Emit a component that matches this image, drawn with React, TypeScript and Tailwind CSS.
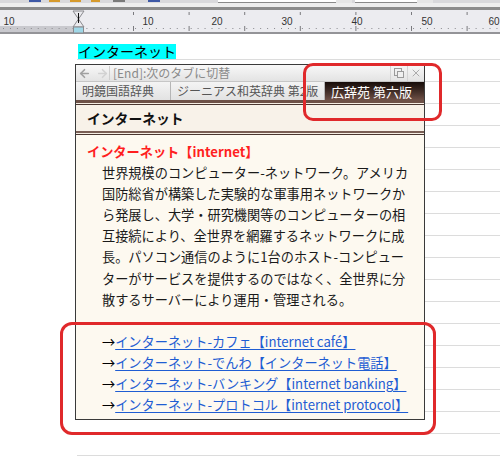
import { ArrowLeft, ArrowRight, X } from 'lucide-react';

const paragraph = [
  '世界規模のコンピューター-ネットワーク。アメリカ',
  '国防総省が構築した実験的な軍事用ネットワークか',
  'ら発展し、大学・研究機関等のコンピューターの相',
  '互接続により、全世界を網羅するネットワークに成',
  '長。パソコン通信のように1台のホスト-コンピュー',
  'ターがサービスを提供するのではなく、全世界に分',
  '散するサーバーにより運用・管理される。',
];

const links = [
  'インターネット-カフェ【internet café】',
  'インターネット-でんわ【インターネット電話】',
  'インターネット-バンキング【internet banking】',
  'インターネット-プロトコル【internet protocol】',
];

// 上のツールバーの端っこ
const ToolbarStrip = () => (
  <svg width={500} height={3} className="block">
    <rect width={500} height={3} fill="#d9d9dc" />
    <rect x={29} y={0} width={12} height={2} fill="#3d58a6" />
    <rect x={49} y={0} width={11} height={2} fill="#d69a2c" />
    <rect x={70} y={0} width={11} height={2} fill="#d69a2c" />
    <rect x={91} y={0} width={9} height={2} fill="#d69a2c" />
    <rect x={113} y={0} width={12} height={2} fill="#7a7a7a" />
    <rect x={148} y={0} width={12} height={2} fill="#3d58a6" />
    <rect x={218} y={0} width={134} height={3} fill="#ffffff" />
    <rect x={218} y={2} width={134} height={1} fill="#8a8a8a" />
    <rect x={336} y={0} width={16} height={3} fill="#e6e6e6" />
    <rect x={355} y={0} width={78} height={3} fill="#ffffff" />
    <rect x={355} y={2} width={78} height={1} fill="#8a8a8a" />
    <rect x={417} y={0} width={16} height={3} fill="#e6e6e6" />
  </svg>
);

const Ruler = () => {
  const dots = Array.from({ length: 72 }, (_, i) => 3 + i * 6.95);
  const majors = Array.from({ length: 7 }, (_, i) => 133 + i * 55.6);
  const nums = [
    { x: 9, t: '10' },
    { x: 148, t: '10' },
    { x: 217, t: '20' },
    { x: 287, t: '30' },
    { x: 357, t: '40' },
    { x: 427, t: '50' },
    { x: 494, t: '60' },
  ];
  return (
    <svg width={500} height={24} className="block">
      <rect width={500} height={24} fill="#ececf0" />
      <rect x={0} y={16} width={74} height={6} fill="#c9c9ce" />
      <rect x={0} y={22} width={500} height={2} fill="#949498" />
      {dots.map(x => (
        <rect key={x} x={x} y={18} width={1} height={1} fill="#8a8a8e" />
      ))}
      {majors.map(x => (
        <g key={x}>
          <rect x={x} y={2} width={1} height={3} fill="#7a7a7e" />
          <rect x={x} y={16} width={1} height={5} fill="#7a7a7e" />
        </g>
      ))}
      {nums.map(n => (
        <text key={n.x} x={n.x} y={15} fontSize={10} fill="#333" textAnchor="middle" fontFamily="Liberation Sans, sans-serif">
          {n.t}
        </text>
      ))}
      <polygon points="73,1 84,1 78.5,9" fill="#eaeaee" stroke="#8a8a8e" strokeWidth={1} />
      <polygon points="78.5,9 73,17 84,17" fill="#eaeaee" stroke="#8a8a8e" strokeWidth={1} />
      <rect x={73.5} y={17} width={10} height={6} fill="#9fd7e7" stroke="#8a8a8e" strokeWidth={1} />
      <rect x={78} y={3} width={1} height={10} fill="#111" />
    </svg>
  );
};

const RestoreIcon = () => (
  <svg width={10} height={10} viewBox="0 0 10 10" className="block">
    <rect x={0.5} y={0.5} width={7} height={7} fill="none" stroke="#9a9a9a" />
    <rect x={3.5} y={3.5} width={6} height={6} fill="#f0f0f0" stroke="#9a9a9a" />
  </svg>
);

export default function App() {
  return (
    <div className="relative w-[500px] h-[457px] overflow-hidden bg-white [font-family:'Noto_Sans_CJK_JP','Noto_Sans',sans-serif]">
      <ToolbarStrip />
      <div className="h-[4px] bg-[#eeeeee]" />
      <div className="h-[3px] bg-[#8c8c8c]" />
      <Ruler />

      {/* ページの行 */}
      <div className="pl-[77px] pt-[4px]">
        <div className="h-[22px] border-b border-[#dcdcdc] flex items-end">
          <span className="ml-[1px] bg-[#00ffff] text-[14px] leading-[15px] text-black">インターネット</span>
        </div>
        {Array.from({ length: 18 }, (_, i) => (
          <div key={i} className="h-[22px] border-b border-[#dcdcdc]" />
        ))}
      </div>

      {/* 辞書ポップアップ */}
      <div className="absolute left-[75px] top-[64px] w-[350px] h-[356px] border border-[#3a3a3a] bg-[#fdf9f0] flex flex-col">
        <div className="h-[17px] bg-gradient-to-b from-[#f8f8f8] to-[#e3e3e3] border-b border-[#c6c6c6] flex items-center">
          <div className="flex items-center gap-[5px] pl-[2px] w-[33px]">
            <ArrowLeft size={13} strokeWidth={3} color="#a0a0a0" />
            <ArrowRight size={13} strokeWidth={3} color="#d2d2d2" />
          </div>
          <div className="w-px h-[14px] bg-[#cfcfcf]" />
          <span className="pl-[3px] text-[12px] leading-none text-[#8a8a8a]">[End]:次のタブに切替</span>
          <div className="ml-auto flex items-center h-full">
            <div className="w-px h-full bg-[#d4d4d4]" />
            <div className="px-[3px]"><RestoreIcon /></div>
            <div className="w-px h-full bg-[#d4d4d4]" />
            <div className="px-[2px]"><X size={12} strokeWidth={1.6} color="#9a9a9a" /></div>
          </div>
        </div>

        <div className="h-[18px] flex text-[12px] leading-none">
          <div className="w-[95px] bg-gradient-to-b from-[#f4f4f4] to-[#e2e2e2] border-r border-[#b6b6b6] flex items-center pl-[6px] text-[#555]">明鏡国語辞典</div>
          <div className="w-[154px] bg-gradient-to-b from-[#f4f4f4] to-[#e2e2e2] border-r border-[#b6b6b6] flex items-center pl-[6px] text-[#555]">ジーニアス和英辞典 第2版</div>
          <div className="flex-1 bg-gradient-to-b from-[#160c09] to-[#6e5046] flex items-center pl-[6px] text-[13px] text-white">広辞苑 第六版</div>
        </div>

        <div className="h-[3px] bg-[#6e5147]" />
        <div className="h-px bg-[#f6eee3]" />
        <div className="h-px bg-[#4a3630]" />
        <div className="h-[26px] bg-[#f8f2e9] flex items-center pl-[11px] text-[13.8px] font-bold text-[#111]">インターネット</div>
        <div className="h-[2px] bg-[#7a5e54]" />
        <div className="h-px bg-[#f6eee3]" />
        <div className="h-px bg-[#4a3630]" />

        <div className="flex-1 pt-[6px] pl-[11px] text-[13.2px] leading-[21.1px] text-[#1a1a1a]">
          <div className="font-bold text-[#ff1f1f]">インターネット【internet】</div>
          <div className="pl-[15px]">
            {paragraph.map(line => (
              <div key={line} className="whitespace-nowrap">{line}</div>
            ))}
            <div className="h-[21.1px]" />
            {links.map(l => (
              <div key={l} className="whitespace-nowrap">
                <span className="text-black">→</span>
                <span className="text-[#1f5dd3] underline underline-offset-2">{l}</span>
              </div>
            ))}
          </div>
        </div>
      </div>

      {/* 赤い注釈の枠 */}
      <div className="absolute left-[303px] top-[63px] w-[139px] h-[58px] border-[3px] border-[#e0292b] rounded-[10px]" />
      <div className="absolute left-[60px] top-[322px] w-[376px] h-[113px] border-[3px] border-[#e0292b] rounded-[12px]" />
    </div>
  );
}
